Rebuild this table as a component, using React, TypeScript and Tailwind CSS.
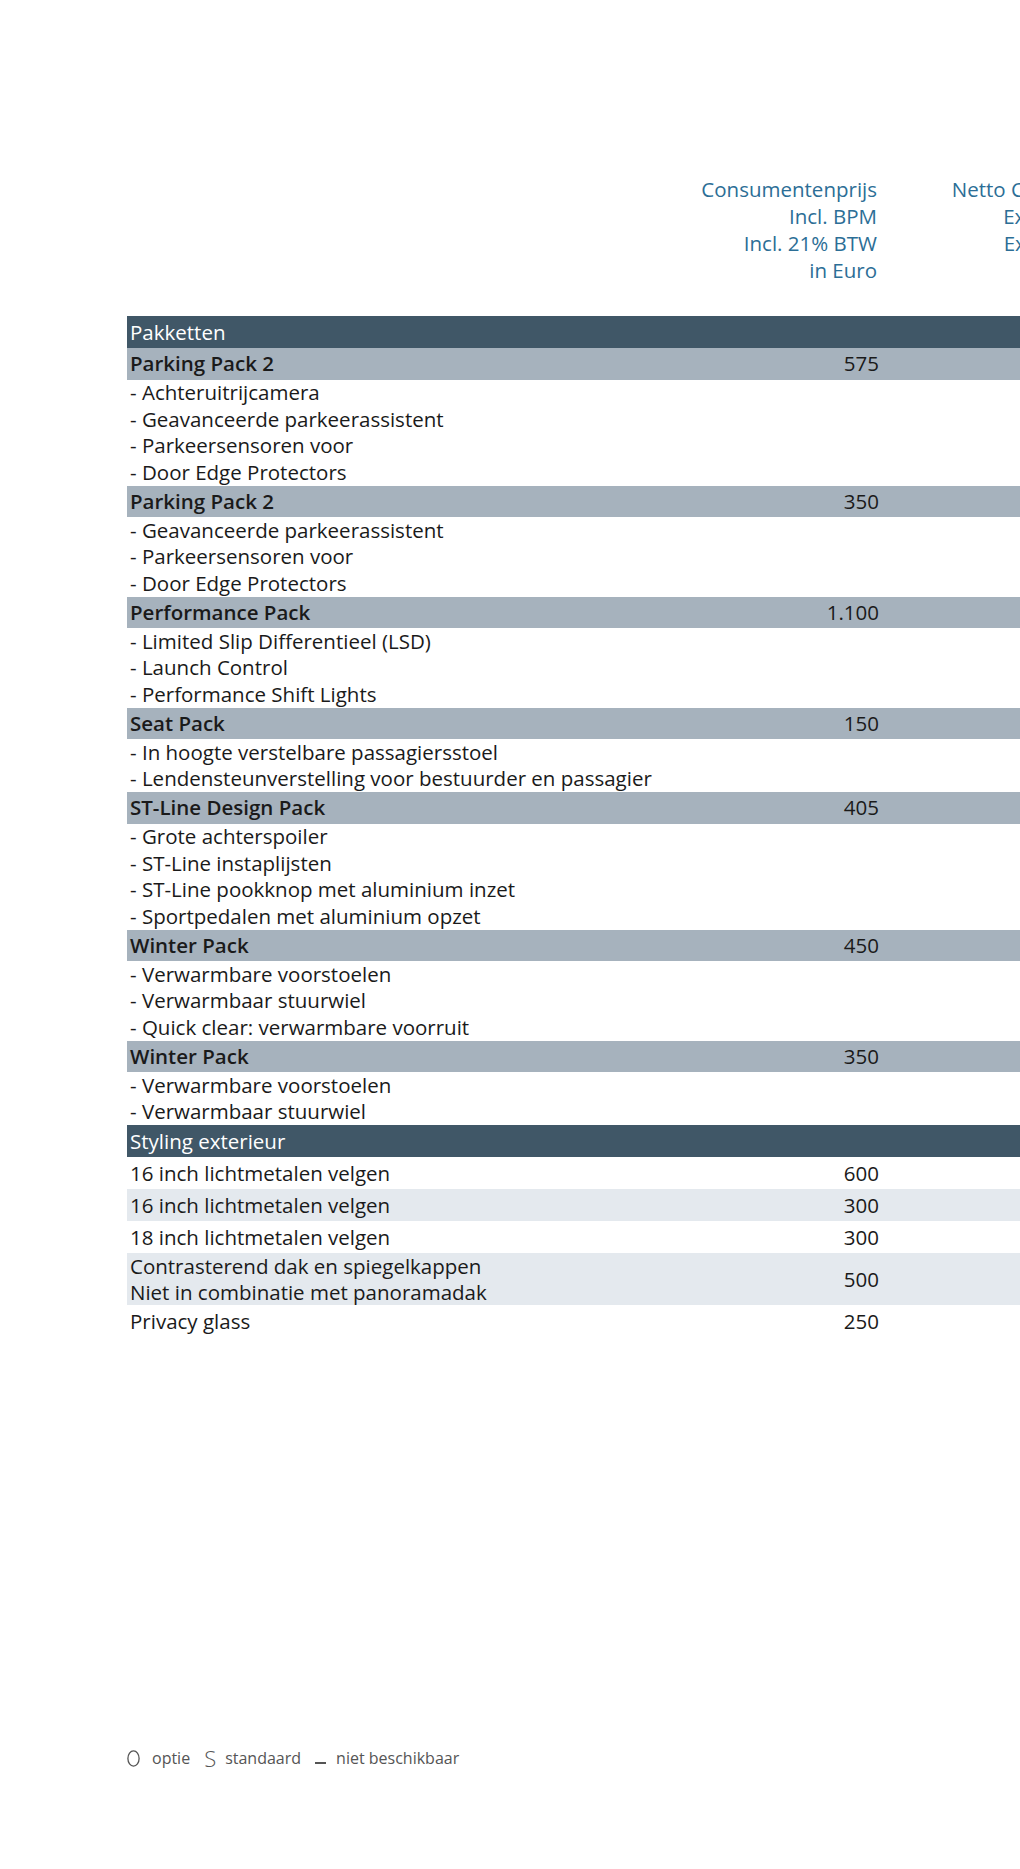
import React from 'react';

type Pack = { name: string; price: string; items: string[] };

const packs: Pack[] = [
  {
    name: 'Parking Pack 2',
    price: '575',
    items: ['Achteruitrijcamera', 'Geavanceerde parkeerassistent', 'Parkeersensoren voor', 'Door Edge Protectors'],
  },
  {
    name: 'Parking Pack 2',
    price: '350',
    items: ['Geavanceerde parkeerassistent', 'Parkeersensoren voor', 'Door Edge Protectors'],
  },
  {
    name: 'Performance Pack',
    price: '1.100',
    items: ['Limited Slip Differentieel (LSD)', 'Launch Control', 'Performance Shift Lights'],
  },
  {
    name: 'Seat Pack',
    price: '150',
    items: ['In hoogte verstelbare passagiersstoel', 'Lendensteunverstelling voor bestuurder en passagier'],
  },
  {
    name: 'ST-Line Design Pack',
    price: '405',
    items: [
      'Grote achterspoiler',
      'ST-Line instaplijsten',
      'ST-Line pookknop met aluminium inzet',
      'Sportpedalen met aluminium opzet',
    ],
  },
  {
    name: 'Winter Pack',
    price: '450',
    items: ['Verwarmbare voorstoelen', 'Verwarmbaar stuurwiel', 'Quick clear: verwarmbare voorruit'],
  },
  {
    name: 'Winter Pack',
    price: '350',
    items: ['Verwarmbare voorstoelen', 'Verwarmbaar stuurwiel'],
  },
];

const styling = [
  { lines: ['16 inch lichtmetalen velgen'], price: '600' },
  { lines: ['16 inch lichtmetalen velgen'], price: '300' },
  { lines: ['18 inch lichtmetalen velgen'], price: '300' },
  { lines: ['Contrasterend dak en spiegelkappen', 'Niet in combinatie met panoramadak'], price: '500' },
  { lines: ['Privacy glass'], price: '250' },
];

const SectionBar: React.FC<{ title: string }> = ({ title }) => (
  <div className="flex h-[32px] items-center bg-[#405767] pl-[3px] text-white">{title}</div>
);

const App: React.FC = () => {
  return (
    <div
      className="relative flex h-[1869px] w-[1020px] flex-col overflow-hidden bg-white text-[20.5px] text-[#1a1a1a]"
      style={{ fontFamily: '"Open Sans", "Liberation Sans", sans-serif' }}
    >
      {/* Kolomkoppen */}
      <div className="ml-[127px] mt-[176px] flex w-[1000px] shrink-0 text-[20.5px] leading-[27px] text-[#2c6e96]">
        <div className="w-[560px] shrink-0" />
        <div className="w-[190px] shrink-0 text-right">
          <p>Consumentenprijs</p>
          <p>Incl. BPM</p>
          <p>Incl. 21% BTW</p>
          <p>in Euro</p>
        </div>
        <div className="w-[218px] shrink-0 whitespace-nowrap text-right">
          <p>Netto Cataloog</p>
          <p>Excl. BPM</p>
          <p>Excl. BTW</p>
        </div>
      </div>

      {/* Tabel */}
      <div className="ml-[127px] mt-[32px] w-[1000px] shrink-0">
        <SectionBar title="Pakketten" />
        {packs.map((pack, i) => (
          <div key={i}>
            <div className="flex h-[31.5px] items-center bg-[#a6b2bd]">
              <div className="w-[560px] shrink-0 pl-[3px] font-semibold">{pack.name}</div>
              <div className="w-[192px] shrink-0 text-right">{pack.price}</div>
            </div>
            {pack.items.map((item, j) => (
              <div key={j} className="flex h-[26.5px] items-center pl-[3px]">
                - {item}
              </div>
            ))}
          </div>
        ))}
        <SectionBar title="Styling exterieur" />
        {styling.map((row, i) => (
          <div
            key={i}
            className={`flex min-h-[32px] items-center ${i % 2 === 1 ? 'bg-[#e4e9ee]' : 'bg-white'}`}
          >
            <div className="w-[560px] shrink-0 pl-[3px] leading-[26px]">
              {row.lines.map((l, k) => (
                <p key={k}>{l}</p>
              ))}
            </div>
            <div className="w-[192px] shrink-0 text-right">{row.price}</div>
          </div>
        ))}
      </div>

      {/* Legenda */}
      <div className="mb-[100px] ml-[127px] mt-auto flex items-center text-[16px] leading-[22px] text-[#555]">
        <svg width="13" height="17" viewBox="0 0 13 17" className="mr-[12px]">
          <ellipse cx="6.5" cy="8.5" rx="5.6" ry="7.6" fill="none" stroke="#555" strokeWidth="1.3" />
        </svg>
        <span>optie</span>
        <span className="ml-[14px] mr-[9px] text-[22px] font-light leading-none">S</span>
        <span>standaard</span>
        <span className="ml-[14px] mr-[10px] inline-block h-[2px] w-[11px] translate-y-[5px] bg-[#555]" />
        <span>niet beschikbaar</span>
      </div>
    </div>
  );
};

export default App;
